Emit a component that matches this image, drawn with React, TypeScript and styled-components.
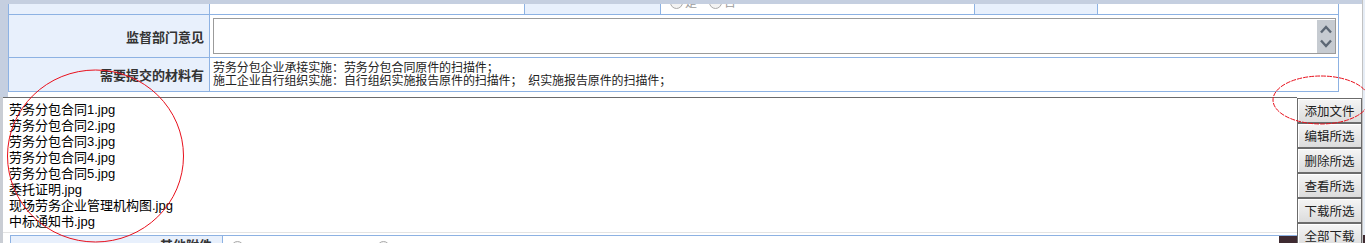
import styled, { createGlobalStyle } from 'styled-components';

const GlobalStyle = createGlobalStyle`
  html, body {
    margin: 0;
    padding: 0;
    background: #fff;
  }
  body {
    font-family: "Liberation Sans", "Noto Sans CJK SC", sans-serif;
    color: #222;
  }
`;

const Page = styled.div`
  position: relative;
  width: 1365px;
  height: 243px;
  overflow: hidden;
  display: flex;
  background: #fff;
`;

const Content = styled.div`
  flex: 1;
  display: flex;
  flex-direction: column;
  min-height: 0;
`;

const EdgeStrip = styled.div`
  width: 3px;
  box-sizing: border-box;
  border-left: 1px solid #c2c2c2;
  background: linear-gradient(#e6edf6 0, #e6edf6 235px, #3e2a31 235px);
`;

const TopBand = styled.div`
  flex: none;
  height: 4px;
  background: #c5cfe0;
`;

const Upper = styled.div`
  flex: none;
  display: flex;
  height: 93px;
`;

const Gutter = styled.div`
  width: 8px;
  background: #c5cfe0;
`;

const FormGrid = styled.div`
  align-self: flex-start;
  display: grid;
  grid-template-columns: 200px 314px 135px 313px 122px 240px;
  grid-template-rows: 10px 42px 33px;
  gap: 1px;
  padding: 0 1px 1px 1px;
  background: #8db2e3;
`;

const Cell = styled.div<{ $label?: boolean; $span?: number }>`
  background: ${p => (p.$label ? '#e8f0fc' : '#fff')};
  grid-column: ${p => (p.$span ? `span ${p.$span}` : 'auto')};
  overflow: hidden;
  display: flex;
  align-items: center;
  justify-content: ${p => (p.$label ? 'flex-end' : 'flex-start')};
  padding: ${p => (p.$label ? '0 5px 0 0' : '0 0 0 3px')};
  font-size: 13px;
  font-weight: ${p => (p.$label ? 'bold' : 'normal')};
  color: #333;
`;

const ClippedRadios = styled.div`
  flex: 1;
  align-self: stretch;
  display: flex;
  align-items: flex-end;
  gap: 12px;
  padding: 0 0 5px 6px;
`;

const RadioOption = styled.span<{ $width?: number }>`
  display: flex;
  align-items: flex-end;
  gap: 2px;
  width: ${p => (p.$width ? `${p.$width}px` : 'auto')};
  font-size: 12px;
  line-height: 12px;
  font-weight: normal;
  color: #9c9c9c;
`;

const RadioDot = styled.span`
  width: 13px;
  height: 13px;
  box-sizing: border-box;
  border: 1px solid #aaa;
  border-radius: 50%;
  background: #f3f3f3;
`;

const Memo = styled.div`
  flex: 1;
  display: flex;
  height: 36px;
  box-sizing: border-box;
  margin-right: 2px;
  border: 1px solid #9b9b9b;
  background: #fff;
`;

const MemoInput = styled.textarea`
  flex: 1;
  border: 0;
  outline: none;
  resize: none;
  padding: 2px;
  font: inherit;
  background: transparent;
`;

const MemoScroll = styled.div`
  width: 18px;
  margin-top: 1px;
  background: #c6cbd1;
  display: flex;
  flex-direction: column;
  align-items: center;
  justify-content: space-evenly;
`;

const Materials = styled.div`
  font-size: 12px;
  line-height: 13px;
  letter-spacing: -0.1px;
  font-weight: normal;
  color: #222;
  white-space: pre;
`;

const Middle = styled.div`
  flex: 1;
  min-height: 0;
  display: flex;
`;

const LeftStrip = styled.div`
  width: 3px;
  background: #c9cdd4;
`;

const ListColumn = styled.div`
  flex: 1;
  display: flex;
  flex-direction: column;
`;

const FileList = styled.div`
  flex: none;
  height: 136px;
  box-sizing: border-box;
  border-top: 1px solid #6a6a6a;
  border-bottom: 1px solid #e4e4e4;
  padding-top: 4px;
  margin-bottom: 2px;
  background: #fff;
`;

const FileItem = styled.div`
  padding-left: 6px;
  font-size: 13px;
  line-height: 16px;
  color: #000;
`;

const BottomRow = styled.div`
  flex: 1;
  display: flex;
  padding-left: 7px;
`;

const BottomTable = styled.div`
  flex: 1;
  display: flex;
  border-top: 1px solid #8db2e3;
`;

const BottomLabel = styled.div`
  width: 201px;
  border-left: 1px solid #8db2e3;
  border-right: 1px solid #8db2e3;
  background: #e8f0fc;
  display: flex;
  justify-content: flex-end;
  padding: 2px 10px 0 0;
  font-size: 13px;
  line-height: 16px;
  font-weight: bold;
  color: #333;
`;

const BottomValue = styled.div`
  flex: 1;
  display: flex;
  align-items: flex-start;
  padding: 5px 0 0 8px;
`;

const DarkPatch = styled.div`
  width: 18px;
  background: #3e2a31;
`;

const ButtonColumn = styled.div`
  width: 65px;
  display: flex;
  flex-direction: column;
  padding-top: 1px;
`;

const SideButton = styled.button`
  flex: none;
  height: 25px;
  box-sizing: border-box;
  border: 1px solid #6b6b6b;
  box-shadow: inset 1px 1px 0 #fff;
  background: linear-gradient(#f5f5f5, #dcdcdc);
  padding: 0;
  font-family: "Liberation Sans", "Noto Sans CJK SC", sans-serif;
  font-size: 12.5px;
  color: #222;
  cursor: pointer;
`;

const Annotation = styled.svg`
  position: absolute;
  left: 0;
  top: 0;
  pointer-events: none;
`;

const Chevron = ({ up }: { up?: boolean }) => (
  <svg width="14" height="9" viewBox="0 0 14 9">
    <path
      d={up ? 'M2 7.5 L7 2 L12 7.5' : 'M2 1.5 L7 7 L12 1.5'}
      fill="none"
      stroke="#5c6774"
      strokeWidth="2.4"
    />
  </svg>
);

const files = [
  '劳务分包合同1.jpg',
  '劳务分包合同2.jpg',
  '劳务分包合同3.jpg',
  '劳务分包合同4.jpg',
  '劳务分包合同5.jpg',
  '委托证明.jpg',
  '现场劳务企业管理机构图.jpg',
  '中标通知书.jpg',
];

const actions = ['添加文件', '编辑所选', '删除所选', '查看所选', '下载所选', '全部下载'];

const App = () => {
  return (
    <>
      <GlobalStyle />
      <Page>
        <Content>
          <TopBand />
          <Upper>
            <Gutter />
            <FormGrid>
              <Cell $label />
              <Cell />
              <Cell $label />
              <Cell>
                <ClippedRadios>
                  <RadioOption>
                    <RadioDot />是
                  </RadioOption>
                  <RadioOption>
                    <RadioDot />否
                  </RadioOption>
                </ClippedRadios>
              </Cell>
              <Cell $label />
              <Cell />

              <Cell $label>监督部门意见</Cell>
              <Cell $span={5}>
                <Memo>
                  <MemoInput defaultValue="" />
                  <MemoScroll>
                    <Chevron up />
                    <Chevron />
                  </MemoScroll>
                </Memo>
              </Cell>

              <Cell $label>需要提交的材料有</Cell>
              <Cell $span={5}>
                <Materials>
                  {'劳务分包企业承接实施：劳务分包合同原件的扫描件；\n施工企业自行组织实施：自行组织实施报告原件的扫描件；　织实施报告原件的扫描件；'}
                </Materials>
              </Cell>
            </FormGrid>
          </Upper>
          <Middle>
            <LeftStrip />
            <ListColumn>
              <FileList>
                {files.map(f => (
                  <FileItem key={f}>{f}</FileItem>
                ))}
              </FileList>
              <BottomRow>
                <BottomTable>
                  <BottomLabel>其他附件</BottomLabel>
                  <BottomValue>
                    <RadioOption $width={146}>
                      <RadioDot />
                    </RadioOption>
                    <RadioOption>
                      <RadioDot />
                    </RadioOption>
                  </BottomValue>
                  <DarkPatch />
                </BottomTable>
              </BottomRow>
            </ListColumn>
            <ButtonColumn>
              {actions.map(a => (
                <SideButton key={a} type="button">
                  {a}
                </SideButton>
              ))}
            </ButtonColumn>
          </Middle>
        </Content>
        <EdgeStrip />
        <Annotation width="1365" height="243" viewBox="0 0 1365 243">
          <ellipse cx="95.5" cy="156" rx="88" ry="86" fill="none" stroke="#e8101c" strokeWidth="1" />
          <ellipse cx="1321" cy="100" rx="48" ry="24" fill="none" stroke="#e8101c" strokeWidth="1" strokeDasharray="5 1" />
        </Annotation>
      </Page>
    </>
  );
};

export default App;
